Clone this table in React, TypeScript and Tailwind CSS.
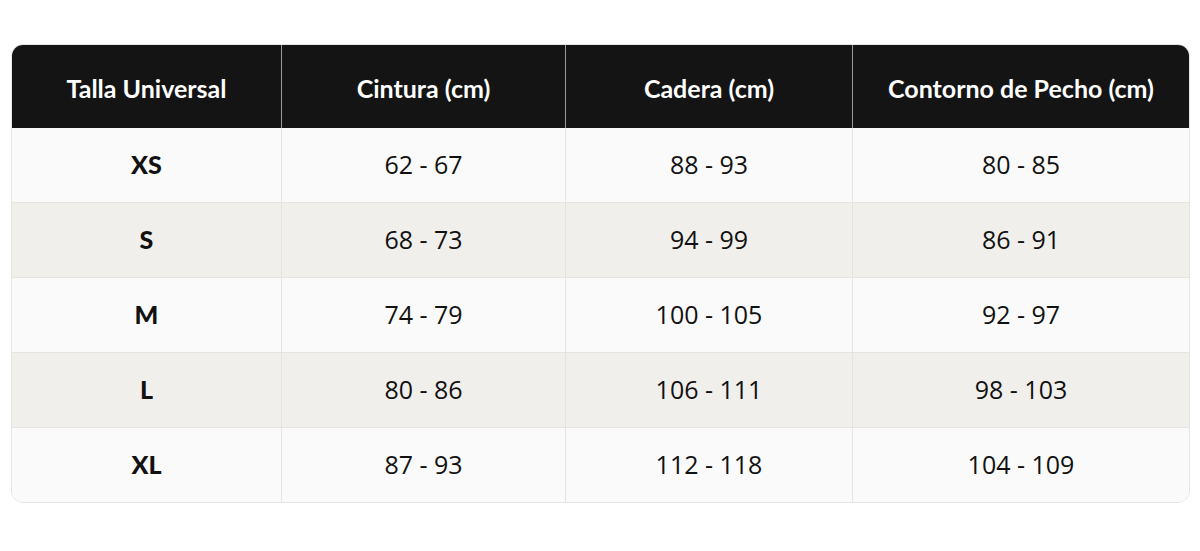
const HEADERS = ["Talla Universal", "Cintura (cm)", "Cadera (cm)", "Contorno de Pecho (cm)"];

const ROWS = [
  ["XS", "62 - 67", "88 - 93", "80 - 85"],
  ["S", "68 - 73", "94 - 99", "86 - 91"],
  ["M", "74 - 79", "100 - 105", "92 - 97"],
  ["L", "80 - 86", "106 - 111", "98 - 103"],
  ["XL", "87 - 93", "112 - 118", "104 - 109"],
];

const COLS = "grid grid-cols-[269px_284px_287px_1fr]";

export default function App() {
  return (
    <div className="w-[1200px] h-[551px] bg-white pt-[44px] pl-[11px] pr-[10px]">
      <div className="rounded-[12px] border border-[#e6e4e1] overflow-hidden">
        <div className={`${COLS} bg-[#141414] h-[83px]`}>
          {HEADERS.map((h, i) => (
            <div
              key={h}
              className={`flex items-center justify-center pt-[5px] text-white font-bold text-[25px] font-['Lato',sans-serif] ${
                i > 0 ? "border-l border-[#9a9a9a]" : ""
              }`}
            >
              {h}
            </div>
          ))}
        </div>
        {ROWS.map((row, r) => (
          <div
            key={row[0]}
            className={`${COLS} ${r % 2 === 1 ? "bg-[#f1efec]" : "bg-[#fafafa]"} ${
              r > 0 ? "h-[75px] border-t border-[#e6e4e1]" : "h-[74px]"
            }`}
          >
            {row.map((c, i) => (
              <div
                key={i}
                className={`flex items-center justify-center text-[#111] ${
                  i === 0
                    ? "font-black text-[25px] font-['Lato',sans-serif]"
                    : "text-[25px] font-['Open_Sans',sans-serif]"
                } ${i > 0 ? "border-l border-[#e6e4e1]" : ""}`}
              >
                {c}
              </div>
            ))}
          </div>
        ))}
      </div>
    </div>
  );
}
